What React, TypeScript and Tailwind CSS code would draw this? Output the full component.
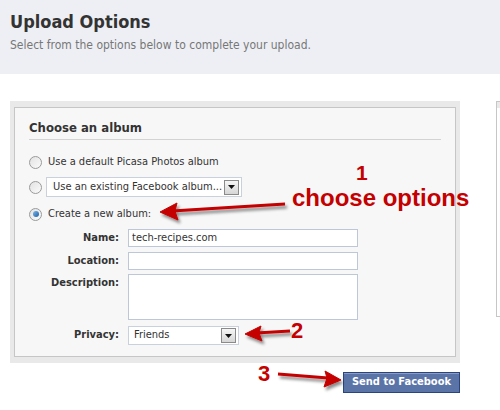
import React from "react";

const font = "font-['Tahoma','DejaVu_Sans_Condensed','DejaVu_Sans',sans-serif]";

function Radio({ checked = false }: { checked?: boolean }) {
  return (
    <span className="flex h-[13px] w-[13px] shrink-0 items-center justify-center rounded-full border border-[#9a9a9a] bg-gradient-to-br from-[#e2e2e2] to-[#fbfbfb]">
      {checked && (
        <span className="h-[6px] w-[6px] rounded-full bg-gradient-to-br from-[#7ab6ea] to-[#1c5fa5]" />
      )}
    </span>
  );
}

function DropButton() {
  return (
    <span className="flex h-[15px] w-[15px] items-center justify-center border border-[#8a8a8a] bg-gradient-to-b from-[#f6f6f6] to-[#d6d6d6]">
      <svg width="7" height="4" viewBox="0 0 7 4">
        <path d="M0 0h7L3.5 4z" fill="#111" />
      </svg>
    </span>
  );
}

function Arrows() {
  return (
    <svg className="pointer-events-none absolute left-0 top-0" width="500" height="410" viewBox="0 0 500 410">
      <defs>
        <filter id="sh" x="-20%" y="-50%" width="140%" height="220%">
          <feDropShadow dx="2" dy="3" stdDeviation="1.6" floodColor="#000" floodOpacity="0.45" />
        </filter>
      </defs>
      <g fill="#c40000" stroke="#c40000" filter="url(#sh)">
        {/* arrow 1 */}
        <line x1="285" y1="204" x2="172" y2="211" strokeWidth="3" />
        <path d="M160 212 L177 203 L175 211 L178 220 Z" strokeWidth="1" />
        {/* arrow 2 */}
        <line x1="290" y1="331" x2="256" y2="333" strokeWidth="3" />
        <path d="M245 334 L261 326 L259 333 L262 341 Z" strokeWidth="1" />
        {/* arrow 3 */}
        <line x1="278" y1="374" x2="328" y2="378" strokeWidth="3" />
        <path d="M341 380 L325 371 L327 378 L324 387 Z" strokeWidth="1" />
      </g>
    </svg>
  );
}

export default function App() {
  return (
    <div className={`relative h-[410px] w-[500px] overflow-hidden bg-white ${font}`}>
      {/* header */}
      <div className="h-[74px] bg-[#edeff4] px-[10px] pt-[11px]">
        <h1 className="text-[18px] font-bold leading-[22px] text-[#333]">Upload Options</h1>
        <p className="mt-[4px] text-[12px] leading-[16px] text-[#777]">
          Select from the options below to complete your upload.
        </p>
      </div>

      <div className="flex gap-[36px] pl-[10px] pt-[27px]">
        <div className="w-[450px] shrink-0">
          {/* album panel */}
          <div className="h-[262px] bg-[#e9e9e9] px-[4px] py-[6px]">
            <div className="h-full border border-[#c6c6c6] bg-[#f7f7f7] px-[14px] text-[11px] text-[#333]">
              <div className="border-b border-[#d3d3d3] pb-[3px] pt-[12px] text-[13px] font-bold leading-[16px] text-[#333]">
                Choose an album
              </div>

              <div className="mt-[12px] flex h-[20px] items-center gap-[6px]">
                <Radio />
                <span>Use a default Picasa Photos album</span>
              </div>

              <div className="mt-[5px] flex h-[20px] items-center gap-[4px]">
                <Radio />
                <div className="flex h-[20px] w-[196px] items-center justify-between border border-[#c9d1de] bg-white pl-[6px] pr-[2px]">
                  <span>Use an existing Facebook album...</span>
                  <DropButton />
                </div>
              </div>

              <div className="mt-[7px] flex h-[20px] items-center gap-[6px]">
                <Radio checked />
                <span>Create a new album:</span>
              </div>

              <div className="-ml-[14px] mt-[5px] grid grid-cols-[104px_230px] gap-x-[9px] font-bold text-[#333]">
                <label className="flex h-[18px] items-center justify-end">Name:</label>
                <div className="flex h-[18px] items-center border border-[#bdc7d8] bg-white px-[3px] font-normal">
                  tech-recipes.com
                </div>

                <label className="mt-[5px] flex h-[18px] items-center justify-end">Location:</label>
                <div className="mt-[5px] h-[18px] border border-[#bdc7d8] bg-white" />

                <label className="mt-[4px] pt-[2px] text-right leading-[14px]">Description:</label>
                <div className="mt-[4px] h-[46px] border border-[#bdc7d8] bg-white" />

                <label className="mt-[6px] flex h-[19px] items-center justify-end">Privacy:</label>
                <div className="mt-[6px] flex h-[19px] w-[111px] items-center justify-between border border-[#c9d1de] bg-white pl-[5px] pr-[2px] font-normal">
                  <span>Friends</span>
                  <DropButton />
                </div>
              </div>
            </div>
          </div>

          {/* send button */}
          <div className="mt-[9px] flex justify-end">
            <button className="h-[21px] w-[117px] border border-[#29447e] bg-[#5b74a8] text-[11px] font-bold text-white shadow-[inset_0_1px_0_#8a9cc2]">
              Send to Facebook
            </button>
          </div>
        </div>

        {/* side panel */}
        <div className="h-[216px] w-[40px] shrink-0 border border-[#c6c6c6] bg-white">
          <div className="h-[6px] bg-[#e9e9e9]" />
        </div>
      </div>

      {/* annotations */}
      <Arrows />
      <div className="pointer-events-none absolute left-[356px] top-[161px] font-['Liberation_Sans',Arial,sans-serif] text-[21px] font-bold leading-[24px] text-[#c40000]">
        1
      </div>
      <div className="pointer-events-none absolute left-[292px] top-[185px] font-['Liberation_Sans',Arial,sans-serif] text-[24px] font-bold leading-[26px] text-[#c40000]">
        choose options
      </div>
      <div className="pointer-events-none absolute left-[291px] top-[320px] font-['Liberation_Sans',Arial,sans-serif] text-[22px] font-bold leading-[22px] text-[#c40000]">
        2
      </div>
      <div className="pointer-events-none absolute left-[258px] top-[363px] font-['Liberation_Sans',Arial,sans-serif] text-[22px] font-bold leading-[22px] text-[#c40000]">
        3
      </div>
    </div>
  );
}
